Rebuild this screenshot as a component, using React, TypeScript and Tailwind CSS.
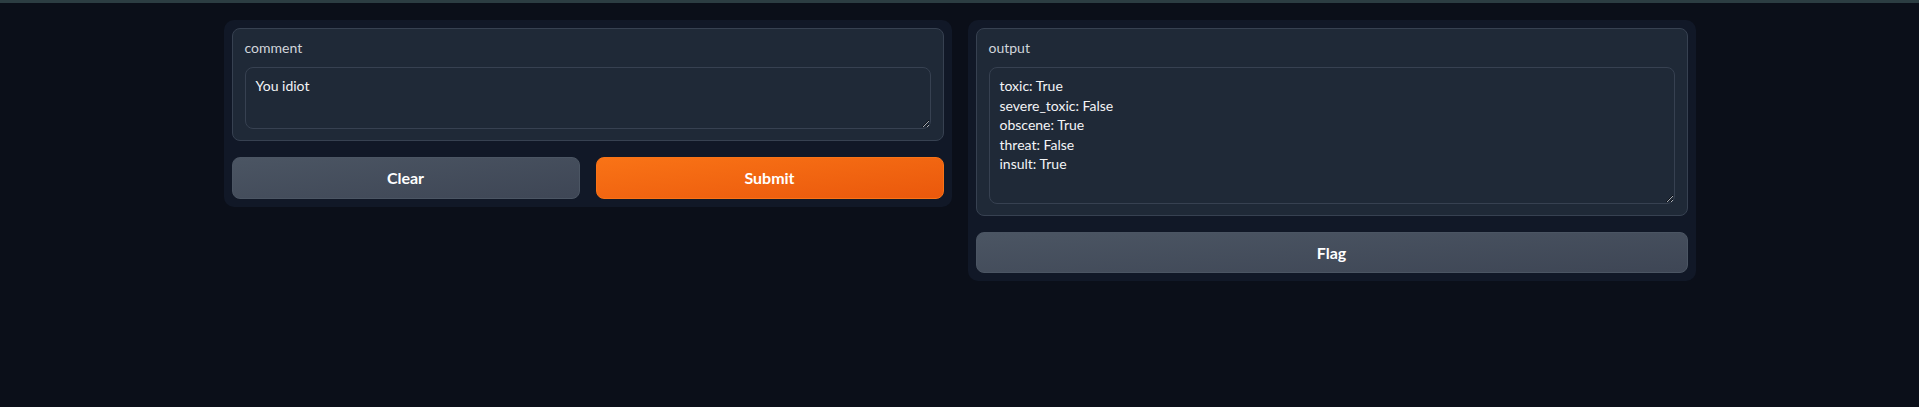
import type { ReactNode } from "react";

const font = { fontFamily: '"Source Sans Pro", Lato, "Liberation Sans", sans-serif' };

function Block({ label, children }: { label: string; children: ReactNode }) {
  return (
    <div className="rounded-lg border border-[#374151] bg-[#1f2937] px-3 pt-[9px] pb-[11px]">
      <div className="mb-[9px] text-sm leading-5 text-[#d1d5db]">{label}</div>
      {children}
    </div>
  );
}

function Area({ value, h }: { value: string; h: string }) {
  return (
    <textarea
      readOnly
      value={value}
      className={`block w-full ${h} resize-y rounded-lg border border-[#374151] bg-[#1f2937] px-[10px] py-2 text-sm leading-[19.5px] text-[#f3f4f6] outline-none`}
      style={font}
    />
  );
}

export default function App() {
  return (
    <div className="min-h-[407px] bg-[#0b0f19]" style={font}>
      {/* top strip */}
      <div className="h-[3px] bg-[#2c3d42]" />

      <div className="mx-auto mt-[17px] grid w-[1472px] grid-cols-2 items-start gap-4">
        {/* input column */}
        <div className="flex flex-col gap-4 rounded-[10px] bg-[#111827] p-2">
          <Block label="comment">
            <Area value="You idiot" h="h-[62px]" />
          </Block>
          <div className="grid grid-cols-2 gap-4">
            <button className="h-[42px] rounded-lg border border-[#4b5563] bg-gradient-to-br from-[#4b5563] to-[#3e4655] text-base font-bold text-white">
              Clear
            </button>
            <button className="h-[42px] rounded-lg border border-[#f97316] bg-gradient-to-br from-[#f97316] to-[#ea580c] text-base font-bold text-white">
              Submit
            </button>
          </div>
        </div>

        {/* output column */}
        <div className="flex flex-col gap-4 rounded-[10px] bg-[#111827] p-2">
          <Block label="output">
            <Area
              value={"toxic: True\nsevere_toxic: False\nobscene: True\nthreat: False\ninsult: True"}
              h="h-[137px]"
            />
          </Block>
          <button className="h-[41px] rounded-lg border border-[#4b5563] bg-gradient-to-br from-[#4b5563] to-[#3e4655] text-base font-bold text-white">
            Flag
          </button>
        </div>
      </div>
    </div>
  );
}
